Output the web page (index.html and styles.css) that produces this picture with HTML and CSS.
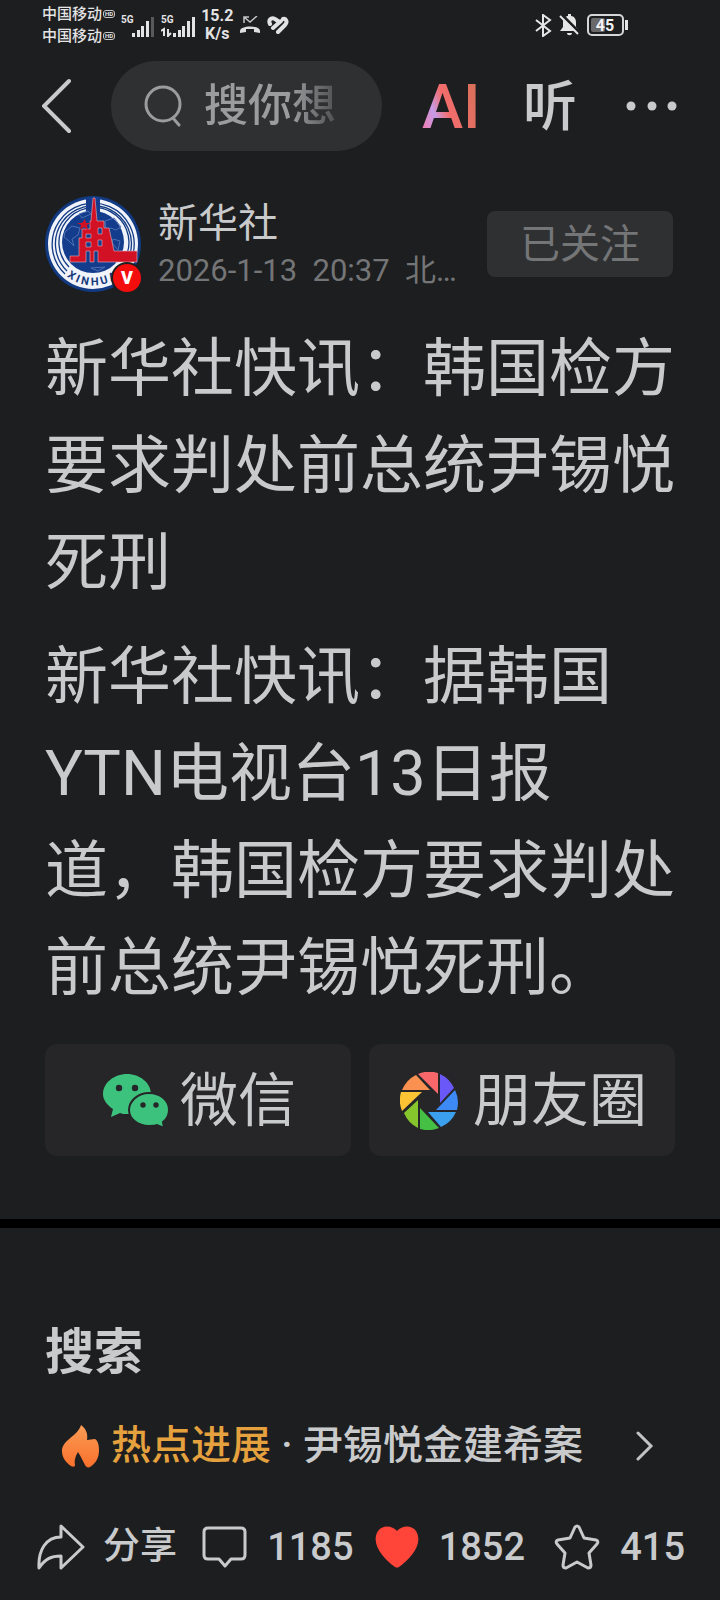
FILE: index.html
```html
<!DOCTYPE html>
<html lang="zh-CN">
<head>
<meta charset="utf-8">
<meta name="viewport" content="width=device-width, initial-scale=1">
<title>新华社快讯</title>
<link rel="stylesheet" href="styles.css">
</head>
<body>
<div class="status">
  <div class="carriers">
    <div class="carrier">中国移动<span class="hd">HD</span></div>
    <div class="carrier">中国移动<span class="hd">HD</span></div>
  </div>
  <svg width="34" height="24" viewBox="0 0 34 24" fill="#e4e4e5"><text x="0" y="10" class="net">5G</text><path d="M11 20h3v4h-3zM16 17h3v7h-3zM20 13h3v11h-3zM25 8h3v16h-3z"/><path fill="#59595b" d="M30 4h3v20h-3z"/></svg>
  <svg width="34" height="24" viewBox="0 0 34 24" fill="#e4e4e5"><text x="0" y="10" class="net">5G</text><path d="M12 20h3v4h-3zM17 17h3v7h-3zM21 13h3v11h-3zM26 8h3v16h-3zM31 4h3v20h-3z"/><path d="M3 23v-7l-3 2M7 16v7l3-3" fill="none" stroke="#e4e4e5" stroke-width="2"/></svg>
  <div class="speed"><span>15.2</span><span>K/s</span></div>
  <svg width="22" height="18" viewBox="0 0 22 18"><path d="M5 7V1h5M5 1l6 5 7-6" fill="none" stroke="#c4c4c5" stroke-width="1.5"/><path d="M1 15c0-6 20-6 20 0v2l-6-1v-3H7v3l-6 1z" fill="#dededf"/></svg>
  <svg width="22" height="19" viewBox="0 0 22 19" fill="none" stroke="#e2e2e3" stroke-width="4" stroke-linecap="round"><path d="M3 8C1 4 4 1 8 3l3 2M6 12l8-7M11 16l7-7c3-3 1-7-2-6"/></svg>
  <div class="status-right">
    <svg width="18" height="23" viewBox="0 0 18 23" fill="none" stroke="#e6e6e7" stroke-width="2"><path d="M2 6l14 11-7 5V1l7 5L2 17"/></svg>
    <svg width="21" height="22" viewBox="0 0 21 22"><path d="M1 17l3-4V8c0-4 3-6 5-6V0h3v2c3 0 5 3 5 6v5l3 4zM8 19h5c0 3-5 3-5 0z" fill="#e6e6e7"/><path d="M2 0l19 19" stroke="#1d1e20" stroke-width="3"/><path d="M1 2l18 18" stroke="#e6e6e7" stroke-width="2"/></svg>
    <svg width="42" height="22" viewBox="0 0 42 22"><rect x="1" y="1" width="35" height="20" rx="4" fill="none" stroke="#d6d6d7" stroke-width="2"/><rect x="4" y="4" width="14" height="14" rx="2" fill="#69696b"/><path d="M38 6h3v10h-3z" fill="#e6e6e7"/><text x="18" y="17" class="level">45</text></svg>
  </div>
</div>

<header class="topbar">
  <button class="plain" aria-label="返回"><svg width="30" height="56" viewBox="0 0 30 56" fill="none" stroke="#c9cacc" stroke-width="4" stroke-linecap="round"><path d="M27 3L2 28l25 25"/></svg></button>
  <label class="search">
    <svg width="38" height="42" viewBox="0 0 38 42" fill="none" stroke="#9b9c9e" stroke-width="3" stroke-linecap="round"><circle cx="19" cy="19" r="17"/><path d="M29 33l6 7"/></svg>
    <input class="search-input" type="text" placeholder="搜你想" aria-label="搜索">
  </label>
  <button class="plain ai">AI</button>
  <button class="plain listen">听</button>
  <button class="plain" aria-label="更多"><svg width="52" height="10" viewBox="0 0 52 10" fill="#c9cacc"><circle cx="5" cy="5" r="4.5"/><circle cx="26" cy="5" r="4.5"/><circle cx="46" cy="5" r="4.5"/></svg></button>
</header>

<main class="article">
  <div class="author">
    <div class="avatar">
      <svg width="96" height="96" viewBox="0 0 96 96">
        <defs><path id="ring" d="M18 77A42 42 0 0 0 86 65"/></defs>
        <circle cx="48" cy="48" r="48" fill="#113a82"/>
        <circle cx="48" cy="48" r="45" fill="#f0f3fa"/>
        <g fill="none" stroke="#113a82" stroke-width="1.3"><path d="M20 78A41 41 0 1 1 88 58M22 75A38 38 0 1 1 85 58M24 71A35 35 0 1 1 82 58"/></g>
        <circle cx="48" cy="46" r="31" fill="#143c8c"/>
        <path d="M41 1h14v35H41z" fill="#143c8c"/>
        <g fill="none" stroke="#4d6fb2" stroke-width="1"><path d="M20 36l7-6 8 2-2 7-6 4 2 7-5-5-5-4zM60 25l9-3 7 9-5 3-5-2-5 3zM68 43l7 2-2 9-6-7zM34 18l9-3 3 3-9 4zM46 72l14-1-7 4z"/></g>
        <path d="M48 2h2l2 23h7v7h5l5 23h23v11H53V55h-4v11h-4V55h-4v11H25v-6h9V42h3v-9h8v-8h1zM41 38v4h5v-4zm0 8v5h5v-5zm12-14v6h4v-6zm0 12v6h4v-6z" fill="#d21125" stroke="#e5b1bb" stroke-width=".6"/>
        <path d="M40 23l1 4h5l-4 2 1 5-4-3-4 3 1-5-4-2h5z" fill="#d21125"/>
        <text class="ring-text"><textPath href="#ring" startOffset="5">X I N H U A</textPath></text>
      </svg>
      <span class="verified">V</span>
    </div>
    <div class="author-info">
      <div class="author-name">新华社</div>
      <div class="author-meta">2026-1-13  20:37  北…</div>
    </div>
    <button class="follow">已关注</button>
  </div>
  <h1 class="text">新华社快讯：韩国检方要求判处前总统尹锡悦死刑</h1>
  <p class="text">新华社快讯：据韩国YTN电视台13日报道，韩国检方要求判处前总统尹锡悦死刑。</p>
  <div class="shares">
    <button class="share-to">
      <svg width="67" height="55" viewBox="0 0 67 55"><path d="M24 0c13 0 24 9 24 20S37 40 24 40c-3 0-5 0-7-1l-9 4 2-8C4 31 0 26 0 20 0 9 11 0 24 0z" fill="#3dc27e"/><path d="M46 19c11 0 20 7 20 17 0 5-2 9-6 12l1 6-7-3c-2 1-5 1-8 1-11 0-20-7-20-16s9-17 20-17z" fill="#3dc27e" stroke="#262628" stroke-width="2"/><g fill="#262628"><circle cx="16" cy="14" r="3.2"/><circle cx="32" cy="14" r="3.2"/><circle cx="40" cy="31" r="2.7"/><circle cx="53" cy="31" r="2.7"/></g></svg>
      微信
    </button>
    <button class="share-to moments">
      <svg width="58" height="58" viewBox="0 0 58 58">
        <path fill="#f8686a" d="M18 2A29 29 0 0 1 38 1V22z"/>
        <path fill="#6a59f8" d="M40 2A29 29 0 0 1 54 16L40 31z"/>
        <path fill="#3d8af7" d="M55 18A29 29 0 0 1 57 38H36z"/>
        <path fill="#3ba0ee" d="M56 40A29 29 0 0 1 41 55L28 40z"/>
        <path fill="#46bf45" d="M39 56A29 29 0 0 1 20 57V36z"/>
        <path fill="#86c52b" d="M18 56A29 29 0 0 1 4 41L18 28z"/>
        <path fill="#fcc435" d="M2 39A29 29 0 0 1 1 20H22z"/>
        <path fill="#fb9150" d="M2 18A29 29 0 0 1 16 3L30 18z"/>
      </svg>
      朋友圈
    </button>
  </div>
</main>

<section class="related">
  <h2 class="related-title">搜索</h2>
  <a class="hot" href="#">
    <svg width="38" height="43" viewBox="0 0 38 43"><defs><linearGradient id="fire" x1="0" y1="0" x2="0" y2="1"><stop offset="0" stop-color="#fb9d55"/><stop offset="1" stop-color="#f8702c"/></linearGradient></defs><path fill="url(#fire)" d="M19 0c5 4 7 8 6 15 3 0 5-1 8-1 3 2 4 6 4 11 0 8-3 13-9 17-2 1-4 0-5-2-2-4-4-8-7-13-3 5-4 9-3 13 0 2-2 2-4 1C3 37 0 32 0 26 0 15 16 11 19 0z"/></svg>
    <span class="hot-text"><span class="hot-tag">热点进展</span><span class="dot">·</span>尹锡悦金建希案</span>
    <svg width="18" height="30" viewBox="0 0 18 30" fill="none" stroke="#c2c3c5" stroke-width="3" stroke-linecap="round"><path d="M2 2l13 13L2 28"/></svg>
  </a>
</section>

<footer class="actions">
  <button class="action wide"><svg width="48" height="46" viewBox="0 0 48 46" fill="none" stroke="#c9cacc" stroke-width="3" stroke-linejoin="round"><path d="M24 2l22 21-22 21V32C14 32 8 35 2 44 1 26 9 13 24 13z"/></svg>分享</button>
  <button class="action"><svg width="45" height="42" viewBox="0 0 45 42" fill="none" stroke="#c9cacc" stroke-width="3" stroke-linejoin="round"><path d="M6 2h33q4 0 4 4v23q0 4-4 4H29l-6 7-6-7H6q-4 0-4-4V6q0-4 4-4z"/></svg>1185</button>
  <button class="action"><svg width="44" height="42" viewBox="0 0 44 42" fill="#ff453a"><path d="M22 5C27-1 37-1 41 5c8 13-6 28-17 36q-2 1-4 0C9 33-5 18 3 5c4-6 14-6 19 0z"/></svg>1852</button>
  <button class="action last"><svg width="46" height="46" viewBox="0 0 46 46" fill="none" stroke="#c9cacc" stroke-width="3" stroke-linejoin="round"><path d="M21 3q2-2 4 0l5 11 12 2q3 1 1 4l-8 9 2 12q0 3-3 3l-11-6-11 6q-3 0-3-3l2-12-8-9q-2-3 1-4l12-2z"/></svg>415</button>
</footer>
</body>
</html>
```
FILE: styles.css
```css
* { box-sizing: border-box; }

body {
  margin: 0;
  min-height: 100vh;
  display: flex;
  flex-direction: column;
  background: #1d1e20;
  color: #c9cacc;
  font-family: Roboto, "Noto Sans CJK SC", sans-serif;
}

svg { display: block; flex: none; }

button {
  border: 0;
  padding: 0;
  color: inherit;
  font-family: inherit;
}

.plain { background: none; }

.status {
  height: 50px;
  padding: 0 91px 0 42px;
  display: flex;
  align-items: center;
  gap: 6px;
  color: #e4e4e5;
}

.carriers { display: grid; row-gap: 2px; }

.carrier {
  display: flex;
  align-items: center;
  gap: 1px;
  font-size: 15px;
  line-height: 20px;
  font-weight: 500;
}

.hd {
  height: 8px;
  padding: 0 1px;
  border: 1px solid #c8c8c9;
  border-radius: 3px;
  font-size: 6px;
  line-height: 6px;
  font-weight: 700;
}

.net { font: 700 10px Roboto, sans-serif; }

.speed {
  display: grid;
  font-size: 16px;
  line-height: 18px;
  font-weight: 700;
  text-align: center;
}

.status-right {
  display: flex;
  align-items: center;
  gap: 7px;
  margin-left: auto;
}

.level {
  font: 700 16px Roboto, sans-serif;
  text-anchor: middle;
  fill: #f2f2f3;
}

.topbar {
  padding: 11px 42px 0;
  display: flex;
  align-items: center;
}

.search {
  flex: 1;
  min-width: 0;
  height: 90px;
  margin: 0 40px 0 39px;
  padding: 0 44px 0 33px;
  display: flex;
  align-items: center;
  gap: 22px;
  border-radius: 45px;
  background: #2f3032;
}

.search-input {
  flex: 1;
  min-width: 0;
  height: 66px;
  padding: 0;
  border: 0;
  outline: 0;
  background: none;
  color: #9b9c9e;
  font: 500 44px Roboto, "Noto Sans CJK SC", sans-serif;
  -webkit-mask-image: linear-gradient(to right, #000 65%, #0004);
  mask-image: linear-gradient(to right, #000 65%, #0004);
}

.search-input::placeholder { color: #9b9c9e; opacity: 1; }

.ai {
  width: 54px;
  padding-top: 2px;
  font-size: 62px;
  line-height: 70px;
  font-weight: 500;
  background: linear-gradient(70deg, #ee7fb4 8%, #c59be6 28%, #f26d6d 46%, #d8705a 90%);
  -webkit-background-clip: text;
  background-clip: text;
  color: transparent;
}

.listen {
  margin: 0 49px 0 47px;
  padding-top: 4px;
  font-size: 54px;
  line-height: 70px;
  font-weight: 500;
}

.article { padding: 45px 45px 63px; }

.author {
  display: flex;
  align-items: center;
  padding-right: 2px;
}

.avatar { position: relative; flex: none; }

.ring-text {
  font: 700 11px Roboto, sans-serif;
  fill: #173a7a;
}

.verified {
  position: absolute;
  right: 0;
  bottom: 0;
  width: 28px;
  height: 28px;
  border-radius: 50%;
  background: #f40d0d;
  box-shadow: 0 0 0 2px #1d1e20;
  color: #fff;
  font-size: 18px;
  line-height: 28px;
  font-weight: 900;
  text-align: center;
}

.author-info { flex: 1; min-width: 0; padding: 3px 0 0 17px; }

.author-name { font-size: 40px; line-height: 50px; }

.author-meta {
  font-size: 31px;
  line-height: 43px;
  color: #747577;
  white-space: pre;
}

.follow {
  width: 186px;
  height: 66px;
  padding-top: 2px;
  border-radius: 8px;
  background: #2f3032;
  color: #747577;
  font-size: 40px;
  line-height: 64px;
}

.text {
  margin: 28px 0 0;
  font-size: 63px;
  line-height: 97px;
  font-weight: 400;
}

.text + .text { margin-top: 17px; }

.shares {
  display: grid;
  grid-template-columns: 1fr 1fr;
  gap: 18px;
  margin-top: 28px;
}

.share-to {
  height: 112px;
  padding: 2px 0 0 3px;
  display: flex;
  align-items: center;
  justify-content: center;
  gap: 10px;
  border-radius: 12px;
  background: #262628;
  font-size: 58px;
  line-height: 84px;
}

.moments { gap: 15px; }

.related {
  flex: 1;
  padding: 88px 45px 0;
  border-top: 9px solid #000;
}

.related-title {
  margin: 0;
  font-size: 49px;
  line-height: 74px;
}

.hot {
  display: flex;
  align-items: center;
  margin-top: 26px;
  padding: 0 21px 0 17px;
  color: inherit;
  font-size: 40px;
  line-height: 60px;
  font-weight: 500;
  text-decoration: none;
}

.hot-text { flex: 1; padding-left: 11px; }

.hot-tag { color: #e5a13d; }

.dot { display: inline-block; width: 32px; text-align: center; }

.actions {
  height: 110px;
  padding: 3px 35px 0 37px;
  display: flex;
  align-items: center;
  justify-content: space-between;
}

.action {
  display: flex;
  align-items: center;
  gap: 20px;
  background: none;
  font-size: 38px;
  line-height: 56px;
  font-weight: 500;
}

.wide { gap: 18px; margin-right: 4px; font-size: 37px; }

.last { margin-left: 8px; }
```
